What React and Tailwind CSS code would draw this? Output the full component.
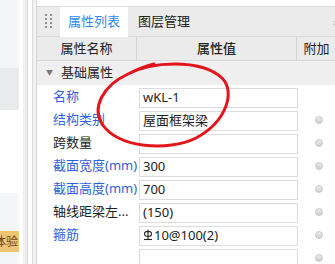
import React from "react";

const FONT = { fontFamily: '"Noto Sans", "Noto Sans CJK SC", sans-serif' };

function Rebar() {
  return (
    <svg width="10" height="12" viewBox="0 0 10 12" className="inline-block mr-[1px] -mt-[2px] align-middle">
      <line x1="5" y1="0.5" x2="5" y2="10.5" stroke="#222" strokeWidth="1.1" />
      <rect x="1.6" y="2.6" width="6.8" height="4.6" rx="2" fill="none" stroke="#222" strokeWidth="1.1" />
      <line x1="1" y1="10.5" x2="9" y2="10.5" stroke="#222" strokeWidth="1.1" />
    </svg>
  );
}

const rows = [
  { label: "名称", blue: true, value: "wKL-1", circle: false },
  { label: "结构类别", blue: true, value: "屋面框架梁", circle: true },
  { label: "跨数量", blue: false, value: "", circle: true },
  { label: "截面宽度(mm)", blue: true, value: "300", circle: true },
  { label: "截面高度(mm)", blue: true, value: "700", circle: true },
  { label: "轴线距梁左...", blue: false, value: "(150)", circle: true },
  { label: "箍筋", blue: true, value: "rebar", circle: true },
  { label: "", blue: false, value: "", circle: true },
];

function Row({ r }) {
  return (
    <div className="flex h-[25px] bg-white">
      <div
        className={
          "w-[101px] shrink-0 pl-[16px] flex items-center text-[13px] whitespace-nowrap overflow-hidden " +
          (r.blue ? "text-[#2f62dc]" : "text-[#222]")
        }
      >
        {r.label}
      </div>
      <div className="w-[160px] shrink-0 pt-[3px] pl-[1px]">
        <div className="h-[20px] w-[159px] border border-[#dcdcdc] bg-white flex items-center pl-[3px] text-[13px] text-[#222] whitespace-nowrap overflow-hidden">
          {r.value === "rebar" ? (
            <span className="flex items-center">
              <Rebar />
              10@100(2)
            </span>
          ) : (
            r.value
          )}
        </div>
      </div>
      <div className="flex-1 flex items-center pl-[17px]">
        {r.circle && (
          <div className="w-[8px] h-[8px] rounded-full border border-[#c8c8c8] bg-gradient-to-b from-[#ececec] to-[#cfcfcf]" />
        )}
      </div>
    </div>
  );
}

export default function App() {
  return (
    <div className="relative w-[335px] h-[264px] overflow-hidden bg-white flex" style={FONT}>
      {/* left app strip */}
      <div className="w-[19px] shrink-0 flex flex-col overflow-hidden">
        <div className="h-[68px] bg-[#f4f5f7]" />
        <div className="h-[42px] bg-[#e9eaec]" />
        <div className="h-[83px] bg-white" />
        <div className="h-[38px] bg-[#f4f5f7]" />
        <div className="h-[21px] bg-[#eec577] flex items-center overflow-hidden">
          <span className="text-[12px] text-[#6b4512] whitespace-nowrap ml-[-6px]">体验</span>
        </div>
        <div className="flex-1 bg-[#f4f5f7]" />
      </div>
      <div className="w-[4px] shrink-0 bg-white" />
      <div className="w-[4px] shrink-0 bg-[#efefef]" />
      <div className="w-[1px] shrink-0 bg-[#d6d6d6]" />
      <div className="w-[4px] shrink-0 bg-white" />
      <div className="w-[1px] shrink-0 bg-[#dadada]" />
      <div className="w-[3px] shrink-0 bg-[#f2f2f2]" />

      {/* panel */}
      <div className="flex-1 flex flex-col border-l border-[#d6d6d6] min-w-0">
        <div className="h-[7px] shrink-0 bg-white border-b border-[#dcdcdc]" />
        {/* tab bar */}
        <div className="h-[30px] shrink-0 bg-[#ebebeb] border-b border-[#d9d9d9] flex items-stretch relative">
          <div className="w-[23px] shrink-0 flex items-center justify-center">
            <div className="grid grid-cols-2 gap-x-[3px] gap-y-[2px] mt-[-2px]">
              {Array.from({ length: 8 }).map((_, i) => (
                <div key={i} className="w-[2px] h-[2px] bg-[#8f8f8f]" />
              ))}
            </div>
          </div>
          <div className="w-[68px] shrink-0 bg-white flex items-center justify-center text-[13px] text-[#2a8af6] mb-[-1px]">
            属性列表
          </div>
          <div className="pl-[10px] flex items-center text-[13px] text-[#222]">图层管理</div>
          <div className="absolute right-[-4px] top-[8px] text-[11px] text-[#aaa]">×</div>
        </div>
        {/* column header */}
        <div className="h-[24px] shrink-0 bg-[#ebebeb] border-b border-[#d9d9d9] flex text-[13px] text-[#222]">
          <div className="w-[100px] shrink-0 flex items-center justify-center border-r border-[#d4d4d4]">属性名称</div>
          <div className="w-[160px] shrink-0 flex items-center justify-center border-r border-[#d4d4d4] font-medium">
            属性值
          </div>
          <div className="flex-1 flex items-center justify-center pl-[1px]">附加</div>
        </div>
        {/* group */}
        <div className="h-[24px] shrink-0 bg-[#efefef] flex items-center text-[13px] text-[#222]">
          <span className="ml-[9px] mr-[8px] text-[7px] text-[#777]">▼</span>
          基础属性
        </div>
        {rows.map((r, i) => (
          <Row key={i} r={r} />
        ))}
      </div>

      {/* red hand-drawn ellipse */}
      <svg className="absolute left-0 top-0 pointer-events-none" width="335" height="264" viewBox="0 0 335 264">
        <path
          d="M128 74 C 150 62, 200 58, 222 78 C 236 92, 226 122, 196 138 C 168 152, 118 148, 102 124 C 92 108, 102 86, 128 74 C 138 69, 146 66, 154 64"
          fill="none"
          stroke="#e3141b"
          strokeWidth="3"
          strokeLinecap="round"
        />
      </svg>
    </div>
  );
}
